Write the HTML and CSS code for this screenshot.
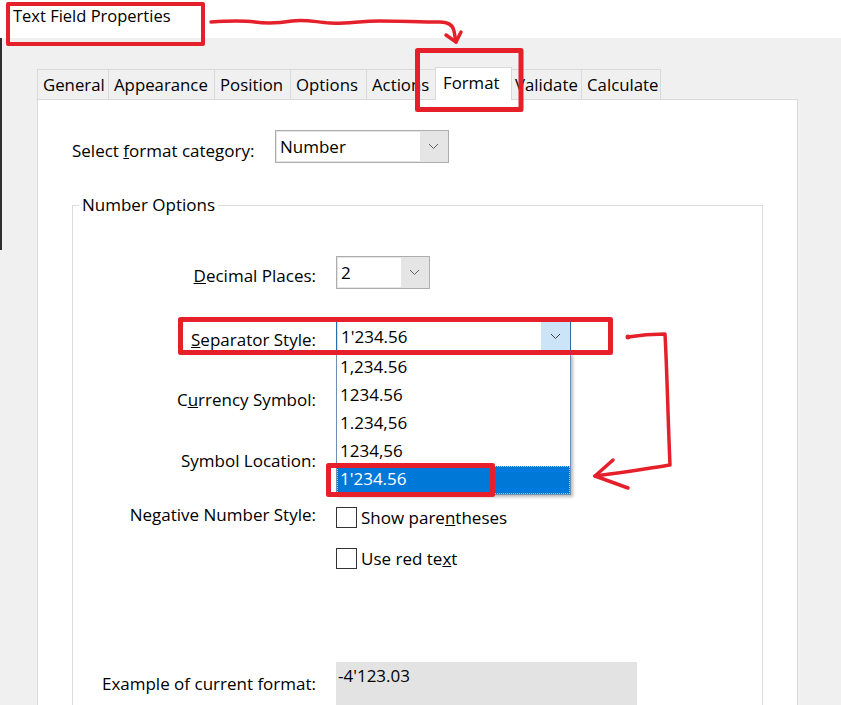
FILE: index.html
```html
<!DOCTYPE html>
<html>
<head>
<meta charset="utf-8">
<link rel="stylesheet" href="styles.css">
</head>
<body>
<div class="page">
  <div class="titlebar">Text Field Properties</div>
  <div class="dialog">
    <div class="tabs">
      <div class="tab t-general">General</div>
      <div class="tab t-appearance">Appearance</div>
      <div class="tab t-position">Position</div>
      <div class="tab t-options">Options</div>
      <div class="tab t-actions">Actions</div>
      <div class="tab t-format active">Format</div>
      <div class="tab t-validate">Validate</div>
      <div class="tab t-calculate">Calculate</div>
    </div>
    <div class="panel">
      <div class="category">
        <span class="cat-label">Select <u>f</u>ormat category:</span>
        <div class="select sel-category">
          <span class="field">Number</span>
          <span class="arrow"><svg width="11" height="7" viewBox="0 0 11 7"><path d="M1 1 L5.5 5.5 L10 1" fill="none" stroke="#606060" stroke-width="1"/></svg></span>
        </div>
      </div>
      <div class="group">
        <div class="legend">Number Options</div>
        <div class="row r-decimal">
          <span class="label"><u>D</u>ecimal Places:</span>
          <div class="select sel-decimal">
            <span class="field">2</span>
            <span class="arrow"><svg width="11" height="7" viewBox="0 0 11 7"><path d="M1 1 L5.5 5.5 L10 1" fill="none" stroke="#606060" stroke-width="1"/></svg></span>
          </div>
        </div>
        <div class="row r-separator">
          <span class="label"><u>S</u>eparator Style:</span>
          <div class="select sel-separator">
            <span class="field">1'234.56</span>
            <span class="arrow"><svg width="11" height="7" viewBox="0 0 11 7"><path d="M1 1 L5.5 5.5 L10 1" fill="none" stroke="#404040" stroke-width="1"/></svg></span>
            <ul class="dropdown">
              <li>1,234.56</li>
              <li>1234.56</li>
              <li>1.234,56</li>
              <li>1234,56</li>
              <li class="selected">1'234.56</li>
            </ul>
          </div>
        </div>
        <div class="row r-currency">
          <span class="label">C<u>u</u>rrency Symbol:</span>
        </div>
        <div class="row r-location">
          <span class="label">Symbol Location:</span>
        </div>
        <div class="row r-negative">
          <span class="label">Negative Number Style:</span>
          <label class="check"><span class="box"></span><span class="check-text">Show pare<u>n</u>theses</span></label>
        </div>
        <div class="row r-red">
          <span class="label"></span>
          <label class="check"><span class="box"></span><span class="check-text">Use red te<u>x</u>t</span></label>
        </div>
        <div class="row r-example">
          <span class="label">Example of current format:</span>
          <div class="example">-4'123.03</div>
        </div>
      </div>
    </div>
  </div>
  <svg class="annotations" width="841" height="705" viewBox="0 0 841 705">
    <g fill="none" stroke="#e5202b" stroke-linecap="round" stroke-linejoin="round">
      <rect x="8" y="4" width="195" height="40" stroke-width="4" stroke-linecap="butt"/>
      <rect x="417.5" y="50.5" width="103.5" height="59" stroke-width="5"/>
      <rect x="180.5" y="319.5" width="430" height="33" stroke-width="5"/>
      <rect x="328.5" y="465.5" width="164" height="29" stroke-width="5"/>
      <path d="M211 22 C225 21 240 20 255 22 C268 24 280 23 292 21 C305 19 315 22 330 23 C345 24 360 21 380 21 C400 21 420 22 440 22 C450 22 453 26 454 31 L456 42" stroke-width="3.5"/>
      <path d="M446 35 L456 42 L461 32" stroke-width="3.5"/>
      <path d="M628 337 C640 335 652 334 665 334 C667 370 668 420 670 465 C650 468 630 472 595 476" stroke-width="3.5"/>
      <path d="M613 460 L595 476 L628 488" stroke-width="3.5"/>
      <circle cx="628" cy="337" r="2.5" fill="#e5202b" stroke="none"/>
    </g>
  </svg>
</div>
</body>
</html>
```

FILE: styles.css
```css
* { box-sizing: border-box; }
html, body { margin: 0; padding: 0; }
body {
  width: 841px;
  height: 705px;
  overflow: hidden;
  background: linear-gradient(#2e2e2e, #2e2e2e) 0 38px / 2px 212px no-repeat, #f0f0f0;
  font-family: "Segoe UI", "Open Sans", "Noto Sans", sans-serif;
  font-size: 16.5px;
  color: #000;
}
.page { position: relative; width: 841px; height: 705px; }
.titlebar {
  height: 38px;
  background: #fff;
  padding: 4px 0 0 13px;
  font-size: 16.5px;
  line-height: 24px;
}
.dialog { padding: 0 43px 0 37px; }
.tabs {
  display: flex;
  align-items: flex-end;
  margin-top: 31px;
  height: 30px;
  position: relative;
  z-index: 1;
  font-size: 16.8px;
}
.tab {
  height: 30px;
  line-height: 29px;
  border: 1px solid #d9d9d9;
  border-bottom: none;
  margin-right: -1px;
  background: #f0f0f0;
  padding-left: 5px;
  white-space: nowrap;
  overflow: hidden;
}
.t-general { width: 72px; }
.t-appearance { width: 107px; }
.t-position { width: 77px; }
.t-options { width: 77px; }
.t-actions { width: 72px; }
.t-format { width: 77px; margin-left: -2px; margin-right: -3px; }
.t-validate { width: 73px; }
.t-calculate { width: 80px; }
.tab.active {
  height: 33px;
  background: #fff;
  line-height: 30px;
  padding-left: 7px;
  position: relative;
  z-index: 2;
  margin-bottom: -1px;
}
.panel {
  background: #fff;
  border: 1px solid #d9d9d9;
  height: 620px;
  padding: 30px 34px 0 34px;
  font-size: 17px;
}
.category { display: flex; align-items: center; }
.cat-label { width: 203px; padding-top: 8px; white-space: nowrap; }
.select {
  position: relative;
  display: flex;
  height: 33px;
  border: 1px solid #adadad;
  background: #e5e5e5;
  padding: 1px;
}
.select .field {
  flex: 1;
  background: #fff;
  padding-left: 3px;
  line-height: 29px;
  font-size: 17px;
}
.select .arrow {
  width: 27px;
  display: flex;
  align-items: center;
  justify-content: center;
}
.sel-category { width: 174px; }
.sel-decimal { width: 94px; }
.sel-separator {
  width: 235px;
  border-color: #2a6cad;
  background: #cce4f7;
}
.sel-separator .arrow { width: 28px; }
.dropdown {
  position: absolute;
  left: -1px;
  top: 32px;
  width: 235px;
  margin: 0;
  padding: 0;
  list-style: none;
  background: #fff;
  border: 1px solid #6d8fb3;
  box-shadow: 2px 2px 3px rgba(0,0,0,0.28);
  z-index: 5;
}
.dropdown li {
  height: 28px;
  line-height: 26px;
  padding-left: 3px;
  font-size: 17px;
}
.dropdown li.selected {
  background: #0078d7;
  color: #fff;
  outline: 1px dotted #9ecbef;
  outline-offset: -1px;
}
.group {
  position: relative;
  margin-top: 42px;
  width: 691px;
  height: 520px;
  border: 1px solid #dcdcdc;
  padding-top: 50px;
}
.legend {
  position: absolute;
  left: 6px;
  top: -13px;
  background: #fff;
  padding: 0 3px;
  line-height: 24px;
}
.row { display: flex; align-items: center; }
.label {
  width: 243px;
  margin-right: 20px;
  text-align: right;
  white-space: nowrap;
  padding-top: 5px;
}
.r-decimal { height: 33px; }
.r-separator { height: 33px; margin-top: 31px; }
.r-currency { height: 33px; margin-top: 31px; }
.r-currency .label { padding-top: 0; margin-top: -3px; }
.r-location { height: 33px; margin-top: 28px; }
.r-location .label { padding-top: 0; margin-top: -3px; }
.r-negative { height: 22px; margin-top: 28px; }
.r-negative .label { padding-top: 0; margin-top: -5px; }
.r-red { height: 21px; margin-top: 20px; }
.r-example { height: 60px; margin-top: 93px; align-items: flex-start; }
.r-example .label { padding-top: 10px; }
.check { display: flex; align-items: center; gap: 4px; }
.check .box {
  width: 21px;
  height: 21px;
  border: 1px solid #333;
  background: #fff;
}
.check-text { white-space: nowrap; }
.example {
  width: 301px;
  height: 60px;
  background: #e3e3e3;
  padding: 2px 0 0 2px;
  font-size: 17px;
  line-height: 24px;
}
.annotations {
  position: absolute;
  left: 0;
  top: 0;
  pointer-events: none;
  z-index: 10;
}
```
